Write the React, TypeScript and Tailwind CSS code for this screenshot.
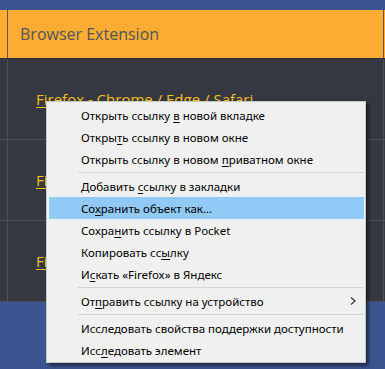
import React from "react";

const menuFont = { fontFamily: '"Noto Sans", "Open Sans", sans-serif' };

type Item = { pre: string; key?: string; post?: string; arrow?: boolean; active?: boolean } | "sep";

const items: Item[] = [
    { pre: "Открыть ссылку ", key: "в", post: " новой вкладке" },
    { pre: "Откры", key: "т", post: "ь ссылку в новом окне" },
    { pre: "Открыть ссылку в новом ", key: "п", post: "риватном окне" },
    "sep",
    { pre: "Добавить ", key: "с", post: "сылку в закладки" },
    { pre: "Со", key: "х", post: "ранить объект как...", active: true },
    { pre: "Сохра", key: "н", post: "ить ссылку в Pocket" },
    { pre: "Копировать сс", key: "ы", post: "лку" },
    { pre: "И", key: "с", post: "кать «Firefox» в Яндекс" },
    "sep",
    { pre: "От", key: "п", post: "равить ссылку на устройство", arrow: true },
    "sep",
    { pre: "Исследовать свойства поддержки доступности" },
    { pre: "Исс", key: "л", post: "едовать элемент" },
];

function Row({ text }: { text: string }) {
    return (
        <div className="flex h-[81px] border-b border-[#4a4e57]">
            <div className="w-[7px]" />
            <div className="flex flex-1 items-center border-x border-[#4a4e57] pl-[28px]">
                <a className="text-[15px] text-[#f5bf1f] underline underline-offset-2" style={{ fontFamily: '"Open Sans", sans-serif' }}>
                    {text}
                </a>
            </div>
            <div className="w-px" />
        </div>
    );
}

export default function App() {
    return (
        <div className="relative h-[369px] w-[385px] overflow-hidden bg-[#3a5590]">
            <div className="h-[10px]" />
            {/* header */}
            <div className="flex h-[49px] border-b border-[#2d3037] bg-[#fdac33]">
                <div className="w-[7px]" />
                <div className="flex flex-1 items-center border-x border-[#5e5a52] pl-[12px]">
                    <span className="text-[16px] text-[#4f555b]" style={{ fontFamily: '"Open Sans", sans-serif' }}>
                        Browser Extension
                    </span>
                </div>
                <div className="w-px" />
            </div>
            <div className="bg-[#353841]">
                <Row text="Firefox - Chrome / Edge / Safari" />
                <Row text="Firefox - Chrome / Edge / Safari" />
                <Row text="Firefox - Chrome / Edge / Safari" />
            </div>

            {/* context menu */}
            <div
                className="absolute left-[46px] top-[101px] w-[320px] border border-[#c8c8c8] bg-[#f0f0f0] pb-[1px] pl-[2px] pr-[1px] pt-[2px] text-[11.5px] text-black shadow-[3px_3px_3px_rgba(0,0,0,0.45)]"
                style={menuFont}
            >
                {items.map((it, i) =>
                    it === "sep" ? (
                        <div key={i} className="flex h-[5px] items-center pl-[29px]">
                            <div className="h-px w-full bg-[#d5d5d5]" />
                        </div>
                    ) : (
                        <div
                            key={i}
                            className={`flex h-[22px] items-center pl-[32px] pr-[7px] ${it.active ? "bg-[#91c9f7]" : ""}`}
                        >
                            <span className="flex-1 whitespace-nowrap pt-[1px]">
                                {it.pre}
                                {it.key && <span className="underline underline-offset-2">{it.key}</span>}
                                {it.post}
                            </span>
                            {it.arrow && (
                                <svg width="8" height="10" viewBox="0 0 8 10">
                                    <path d="M2 1.5 L6 5 L2 8.5" fill="none" stroke="#333" strokeWidth="1.2" />
                                </svg>
                            )}
                        </div>
                    )
                )}
            </div>
        </div>
    );
}
